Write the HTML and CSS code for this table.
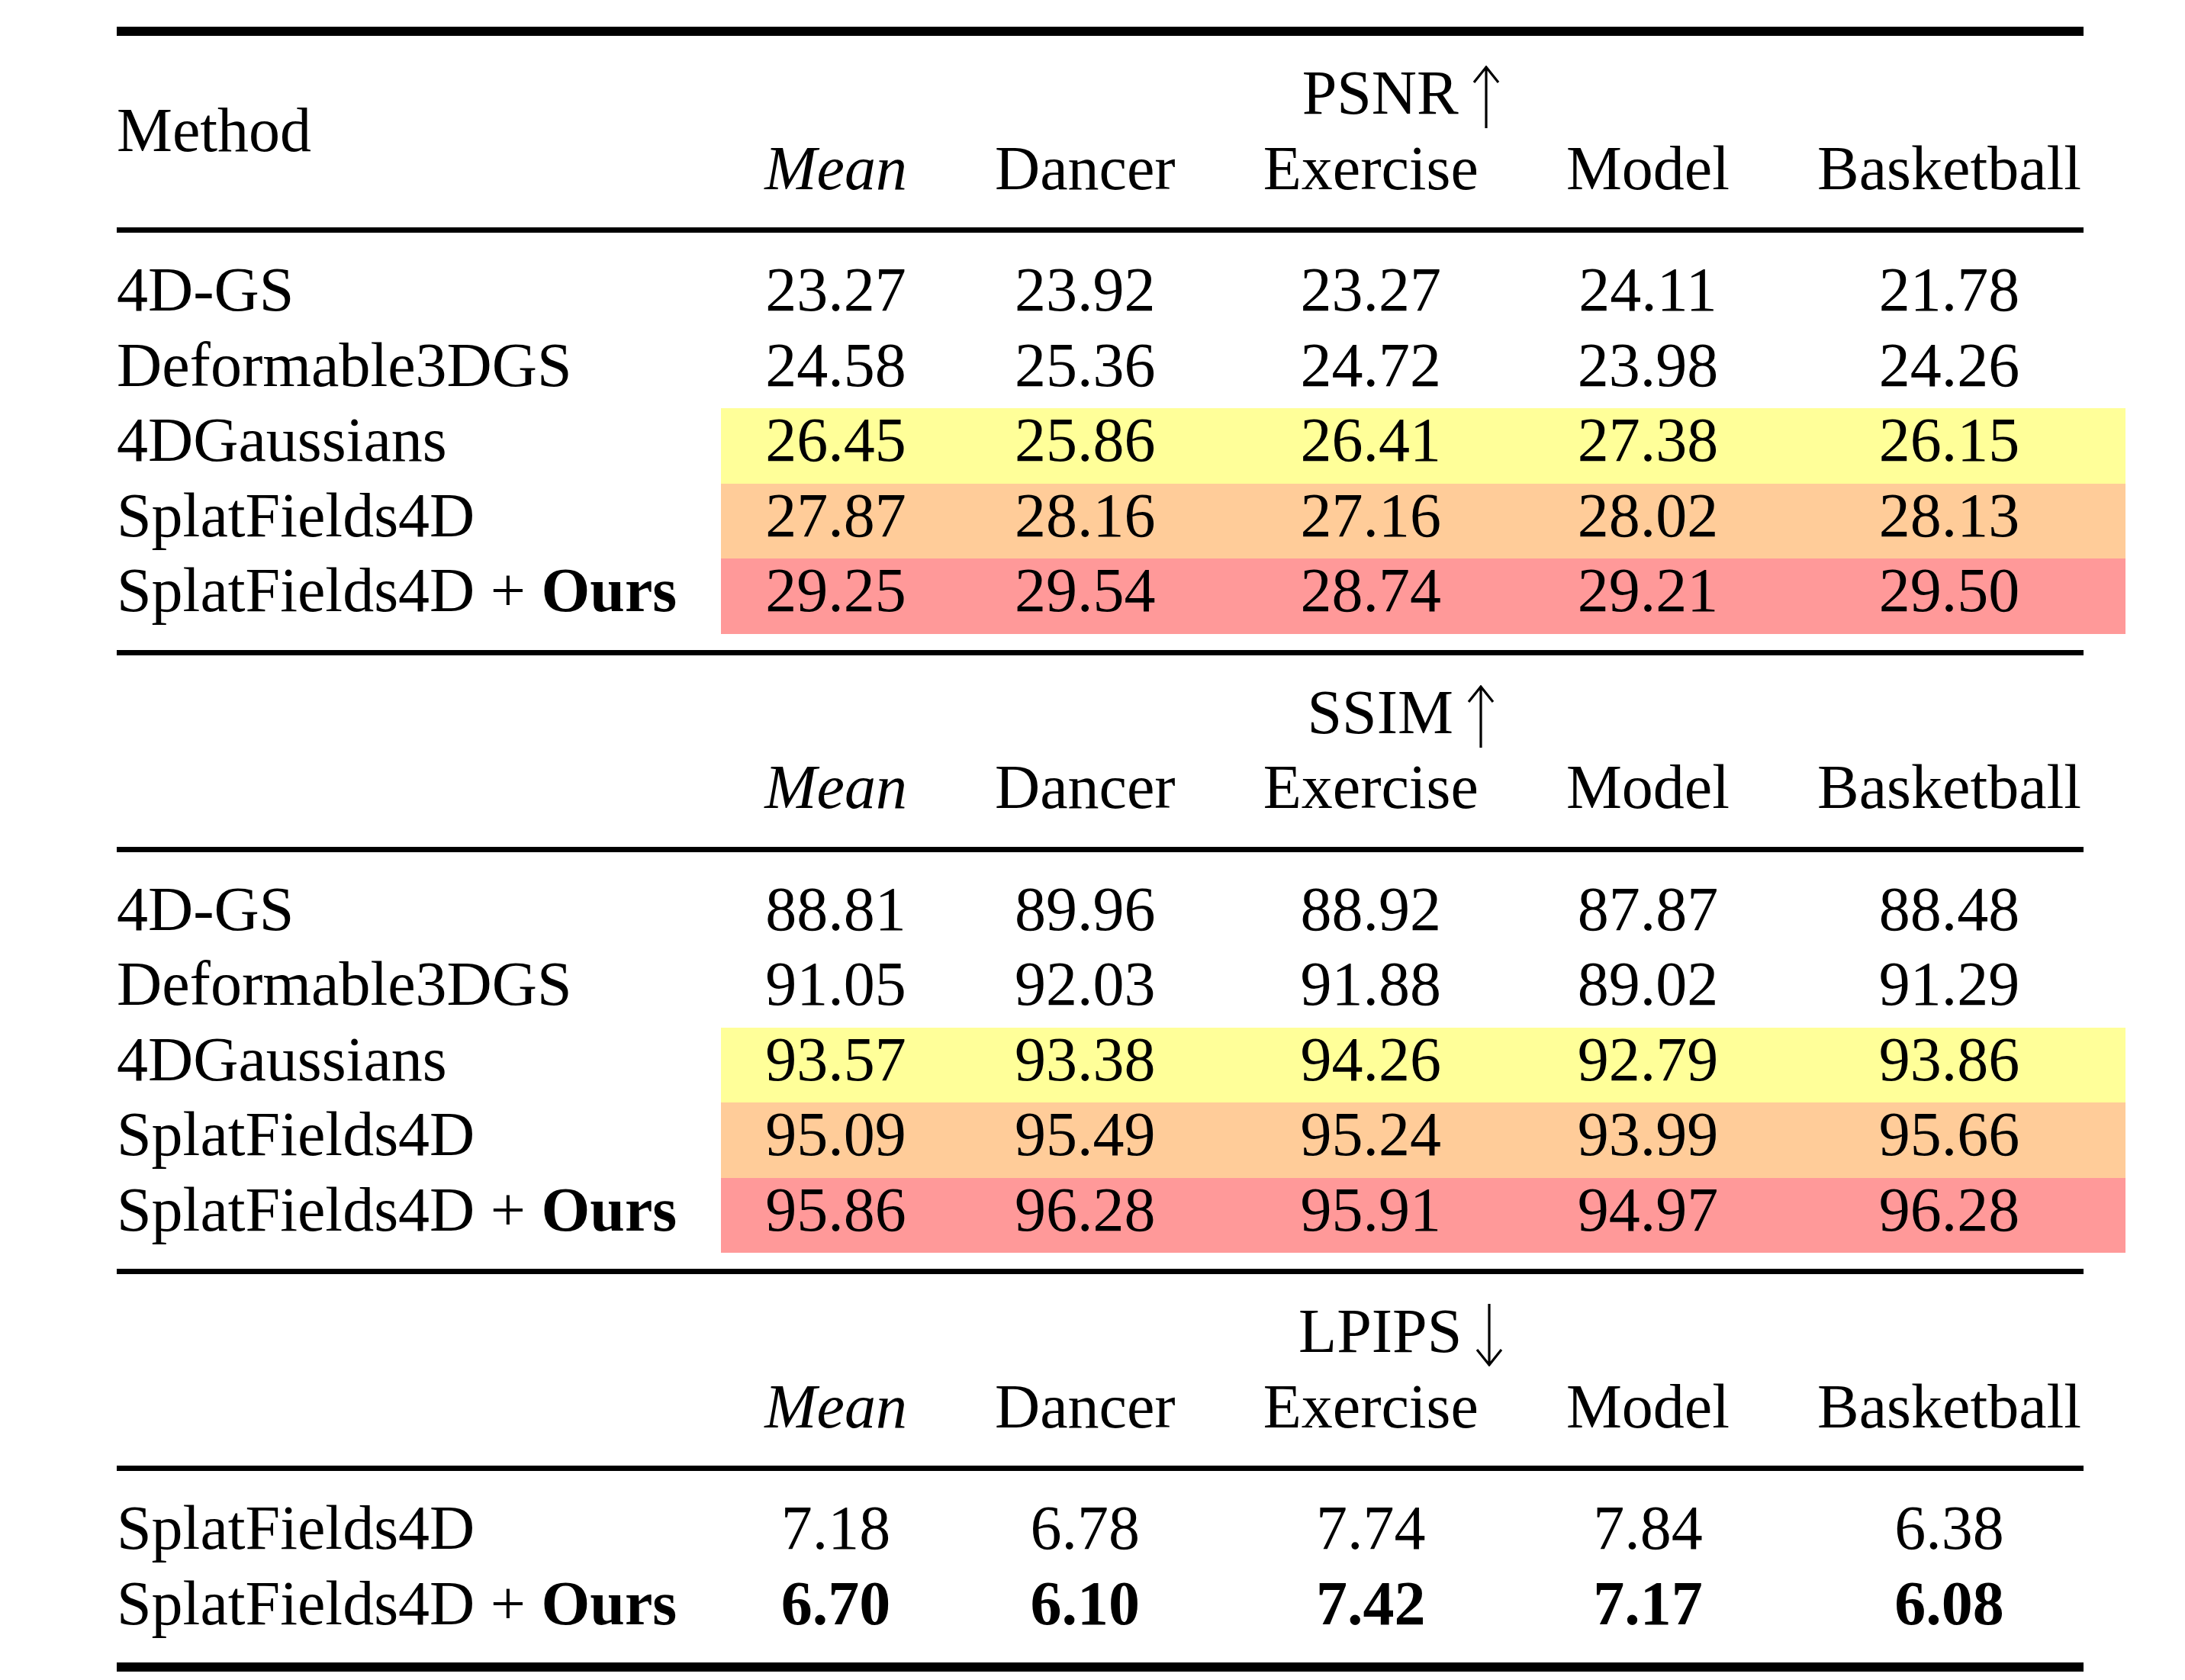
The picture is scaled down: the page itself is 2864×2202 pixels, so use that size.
FILE: index.html
```html
<!DOCTYPE html>
<html lang="en">
<head>
<meta charset="utf-8">
<title>Results table</title>
<link rel="stylesheet" href="styles.css">
</head>
<body>
<main class="tbl">
  <div class="rule heavy top"></div>

  <div class="c first method">Method</div>
  <div class="c metric">PSNR<svg class="arrow" viewBox="0 0 36 82"><path d="M18 82V3M2 22L18 2L34 22"/></svg></div>
  <div class="c"><i>Mean</i></div>
  <div class="c">Dancer</div>
  <div class="c">Exercise</div>
  <div class="c">Model</div>
  <div class="c">Basketball</div>

  <div class="rule light"></div>

  <div class="c first">4D-GS</div>
  <div class="c">23.27</div><div class="c">23.92</div><div class="c">23.27</div><div class="c">24.11</div><div class="c">21.78</div>
  <div class="c first">Deformable3DGS</div>
  <div class="c">24.58</div><div class="c">25.36</div><div class="c">24.72</div><div class="c">23.98</div><div class="c">24.26</div>
  <div class="c first">4DGaussians</div>
  <div class="c third">26.45</div><div class="c third">25.86</div><div class="c third">26.41</div><div class="c third">27.38</div><div class="c third">26.15</div>
  <div class="c first">SplatFields4D</div>
  <div class="c second">27.87</div><div class="c second">28.16</div><div class="c second">27.16</div><div class="c second">28.02</div><div class="c second">28.13</div>
  <div class="c first">SplatFields4D + <b>Ours</b></div>
  <div class="c best">29.25</div><div class="c best">29.54</div><div class="c best">28.74</div><div class="c best">29.21</div><div class="c best">29.50</div>

  <div class="rule light"></div>

  <div class="c first method"></div>
  <div class="c metric">SSIM<svg class="arrow" viewBox="0 0 36 82"><path d="M18 82V3M2 22L18 2L34 22"/></svg></div>
  <div class="c"><i>Mean</i></div>
  <div class="c">Dancer</div>
  <div class="c">Exercise</div>
  <div class="c">Model</div>
  <div class="c">Basketball</div>

  <div class="rule light"></div>

  <div class="c first">4D-GS</div>
  <div class="c">88.81</div><div class="c">89.96</div><div class="c">88.92</div><div class="c">87.87</div><div class="c">88.48</div>
  <div class="c first">Deformable3DGS</div>
  <div class="c">91.05</div><div class="c">92.03</div><div class="c">91.88</div><div class="c">89.02</div><div class="c">91.29</div>
  <div class="c first">4DGaussians</div>
  <div class="c third">93.57</div><div class="c third">93.38</div><div class="c third">94.26</div><div class="c third">92.79</div><div class="c third">93.86</div>
  <div class="c first">SplatFields4D</div>
  <div class="c second">95.09</div><div class="c second">95.49</div><div class="c second">95.24</div><div class="c second">93.99</div><div class="c second">95.66</div>
  <div class="c first">SplatFields4D + <b>Ours</b></div>
  <div class="c best">95.86</div><div class="c best">96.28</div><div class="c best">95.91</div><div class="c best">94.97</div><div class="c best">96.28</div>

  <div class="rule light"></div>

  <div class="c first method"></div>
  <div class="c metric">LPIPS<svg class="arrow" viewBox="0 0 36 82"><path d="M18 0V79M2 60L18 80L34 60"/></svg></div>
  <div class="c"><i>Mean</i></div>
  <div class="c">Dancer</div>
  <div class="c">Exercise</div>
  <div class="c">Model</div>
  <div class="c">Basketball</div>

  <div class="rule light"></div>

  <div class="c first">SplatFields4D</div>
  <div class="c">7.18</div><div class="c">6.78</div><div class="c">7.74</div><div class="c">7.84</div><div class="c">6.38</div>
  <div class="c first">SplatFields4D + <b>Ours</b></div>
  <div class="c"><b>6.70</b></div><div class="c"><b>6.10</b></div><div class="c"><b>7.42</b></div><div class="c"><b>7.17</b></div><div class="c"><b>6.08</b></div>

  <div class="rule heavy bottom"></div>
</main>
</body>
</html>
```

FILE: styles.css
```css
html, body {
  margin: 0;
  padding: 0;
  background: #ffffff;
}

body {
  font-family: "Liberation Serif", "Times New Roman", serif;
  font-size: 82px;
  color: #000000;
}

.tbl {
  display: grid;
  grid-template-columns: repeat(6, auto);
  width: max-content;
  margin: 35px 0 0 153px;
}

.c {
  line-height: 82px;
  padding: 1px 57.5px 15.5px;
  text-align: center;
  white-space: nowrap;
}

.c.first {
  padding-left: 0;
  text-align: left;
}

.method {
  grid-row: span 2;
  padding-top: 49.5px;
}

.metric {
  grid-column: span 5;
  padding-right: 115.5px;
}

.arrow {
  width: 36px;
  height: 82px;
  margin-left: 18px;
  margin-bottom: -19px;
  vertical-align: baseline;
  fill: none;
  stroke: #000000;
  stroke-width: 3.2px;
}

.third { background: #ffff99; }
.second { background: #ffcc99; }
.best { background: #ff9999; }

.rule {
  grid-column: 1 / -1;
  background: #000000;
  margin-right: 54.5px;
}

.rule.heavy { height: 12px; }

.rule.light {
  height: 7px;
  margin-top: 21px;
  margin-bottom: 33px;
}

.rule.top { margin-bottom: 33px; }

.rule.bottom { margin-top: 21px; }
```
